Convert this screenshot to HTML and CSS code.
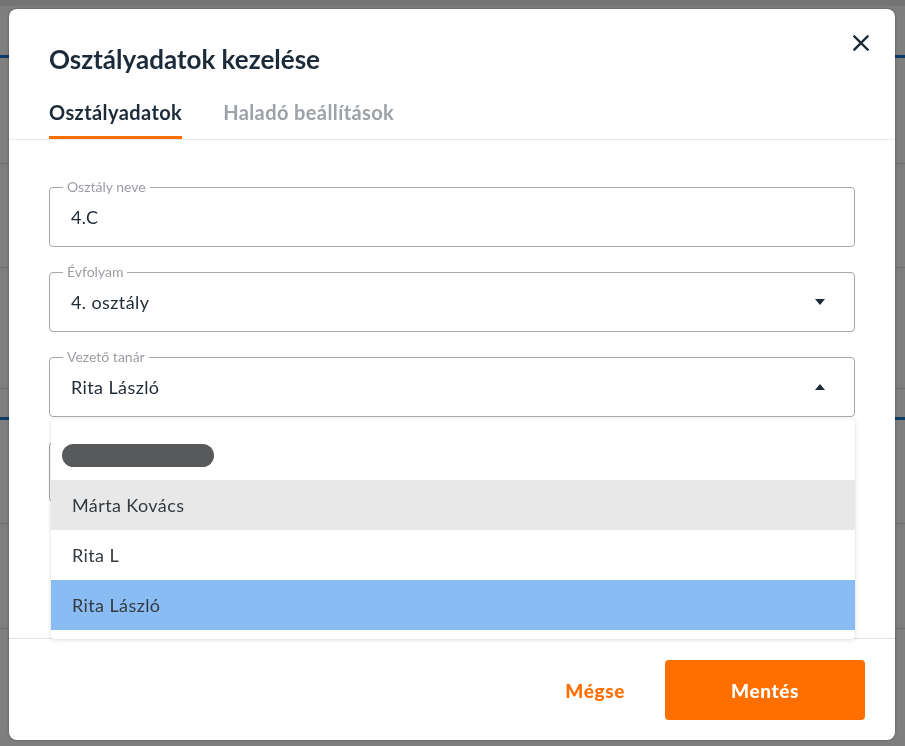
FILE: index.html
```html
<!DOCTYPE html>
<html lang="hu">
<head>
<meta charset="utf-8">
<title>Osztályadatok kezelése</title>
<link rel="stylesheet" href="styles.css">
</head>
<body>
<div class="app">
  <div class="app-top"></div>
  <div class="app-gap1"></div>
  <div class="app-blue"></div>
  <div class="app-row r1"></div>
  <div class="app-row r2"></div>
  <div class="app-row r3"></div>
  <div class="app-gap2"></div>
  <div class="app-blue"></div>
  <div class="app-row r4"></div>
  <div class="app-row r5"></div>
</div>

<div class="modal">
  <div class="modal-header">
    <h1 class="modal-title">Osztályadatok kezelése</h1>
    <button class="close-btn" aria-label="Bezárás">
      <svg width="16" height="16" viewBox="0 0 16 16"><path d="M1.5 1.5 L14.5 14.5 M14.5 1.5 L1.5 14.5" stroke="#1c2b39" stroke-width="2.4" stroke-linecap="square" fill="none"/></svg>
    </button>
  </div>
  <div class="tabs">
    <div class="tab active">Osztályadatok</div>
    <div class="tab">Haladó beállítások</div>
  </div>
  <div class="content">
    <fieldset class="field">
      <legend>Osztály neve</legend>
      <div class="field-value">4.C</div>
    </fieldset>
    <fieldset class="field">
      <legend>Évfolyam</legend>
      <div class="field-value"><span>4. osztály</span>
        <svg class="arrow" width="10" height="6" viewBox="0 0 10 6"><path d="M0 0 L10 0 L5 6 Z" fill="#1c2b39"/></svg>
      </div>
    </fieldset>
    <fieldset class="field">
      <legend>Vezető tanár</legend>
      <div class="field-value"><span>Rita László</span>
        <svg class="arrow" width="10" height="6" viewBox="0 0 10 6"><path d="M0 6 L10 6 L5 0 Z" fill="#1c2b39"/></svg>
      </div>
    </fieldset>
    <fieldset class="field">
      <legend>Tanulók</legend>
      <div class="field-value"></div>
    </fieldset>

    <ul class="menu">
      <li class="menu-item"><span class="redacted"></span></li>
      <li class="menu-item hover">Márta Kovács</li>
      <li class="menu-item">Rita L</li>
      <li class="menu-item selected">Rita László</li>
    </ul>
  </div>
  <div class="modal-footer">
    <button class="btn-text">Mégse</button>
    <button class="btn-primary">Mentés</button>
  </div>
</div>
</body>
</html>
```

FILE: styles.css
```css
* { box-sizing: border-box; }
html, body { margin: 0; padding: 0; }
body {
  width: 905px;
  height: 746px;
  overflow: hidden;
  background: #7f7f7f;
  font-family: Lato, "Noto Sans", "Liberation Sans", sans-serif;
}

/* dimmed application behind the dialog */
.app { display: flex; flex-direction: column; }
.app-top { height: 6px; background: #747474; }
.app-gap1 { height: 49px; }
.app-blue { height: 3px; background: #0c3a66; }
.app-row { border-bottom: 1px solid #6e6e6e; }
.r1 { height: 106px; }
.r2 { height: 104px; }
.r3 { height: 121px; }
.app-gap2 { height: 28px; }
.r4 { height: 104px; }
.r5 { height: 105px; }

/* dialog */
.modal {
  position: fixed;
  left: 9px;
  top: 9px;
  width: 886px;
  height: 731px;
  background: #fff;
  border-radius: 8px;
  box-shadow: 0 0 3px rgba(0,0,0,0.35);
  display: flex;
  flex-direction: column;
  overflow: hidden;
}
.modal-header {
  display: flex;
  justify-content: space-between;
  align-items: flex-start;
  padding: 34px 14px 0 40px;
}
.modal-title {
  margin: 0;
  font-size: 26px;
  line-height: 32px;
  font-weight: 700;
  color: #1c2b39;
}
.close-btn {
  border: 0;
  background: none;
  padding: 0;
  margin-top: -20px;
  width: 40px;
  height: 40px;
  display: flex;
  align-items: center;
  justify-content: center;
  cursor: pointer;
}

.tabs {
  display: flex;
  gap: 41px;
  padding: 25px 0 0 40px;
  border-bottom: 1px solid #e8e8e8;
}
.tab {
  font-size: 20px;
  line-height: 24px;
  font-weight: 700;
  letter-spacing: 0.4px;
  color: #9ca2a8;
  padding-bottom: 12px;
  border-bottom: 3px solid transparent;
}
.tab.active {
  color: #1c2b39;
  border-bottom-color: #ff6f00;
}

.content {
  flex: 1;
  min-height: 0;
  position: relative;
  z-index: 2;
  padding: 39px 40px 0 40px;
  display: flex;
  flex-direction: column;
  gap: 17px;
}
.field {
  margin: 0;
  padding: 0 29px 8px 21px;
  border: 1px solid #a4a8ac;
  border-radius: 4px;
  min-width: 0;
  flex-shrink: 0;
}
.field legend {
  margin-left: -8px;
  padding: 0 4px;
  font-size: 14px;
  line-height: 16px;
  color: #9a9ea3;
}
.field-value {
  height: 43px;
  display: flex;
  align-items: center;
  justify-content: space-between;
  font-size: 18px;
  letter-spacing: 0.4px;
  color: #1f2a35;
}
.arrow { display: block; }

.menu {
  position: absolute;
  left: 42px;
  top: 279px;
  width: 804px;
  margin: 0;
  padding: 11px 0 9px 0;
  list-style: none;
  background: #fff;
  border-radius: 3px;
  box-shadow: 0 1px 5px rgba(0,0,0,0.13), 0 0 1px rgba(0,0,0,0.12);
}
.menu-item {
  height: 50px;
  display: flex;
  align-items: center;
  padding: 0 21px;
  font-size: 18px;
  letter-spacing: 0.4px;
  color: #333a40;
}
.menu-item.hover { background: #e8e8e8; }
.menu-item.selected { background: #8abcf4; }
.redacted {
  display: block;
  width: 152px;
  height: 23px;
  margin-left: -10px;
  border-radius: 12px;
  background: #58595b;
}

.modal-footer {
  display: flex;
  justify-content: flex-end;
  align-items: center;
  gap: 20px;
  padding: 21px 30px 20px 0;
  border-top: 1px solid #e4e4e4;
  position: relative;
  z-index: 1;
  flex-shrink: 0;
}
.btn-text {
  border: 0;
  background: none;
  font-family: inherit;
  font-size: 19px;
  font-weight: 900;
  letter-spacing: 0.6px;
  color: #ff6f00;
  padding: 0 20px;
  height: 60px;
  cursor: pointer;
}
.btn-primary {
  border: 0;
  width: 200px;
  height: 60px;
  border-radius: 4px;
  background: #ff6f00;
  color: #fff;
  font-family: inherit;
  font-size: 19px;
  font-weight: 900;
  letter-spacing: 0.6px;
  cursor: pointer;
}
```
